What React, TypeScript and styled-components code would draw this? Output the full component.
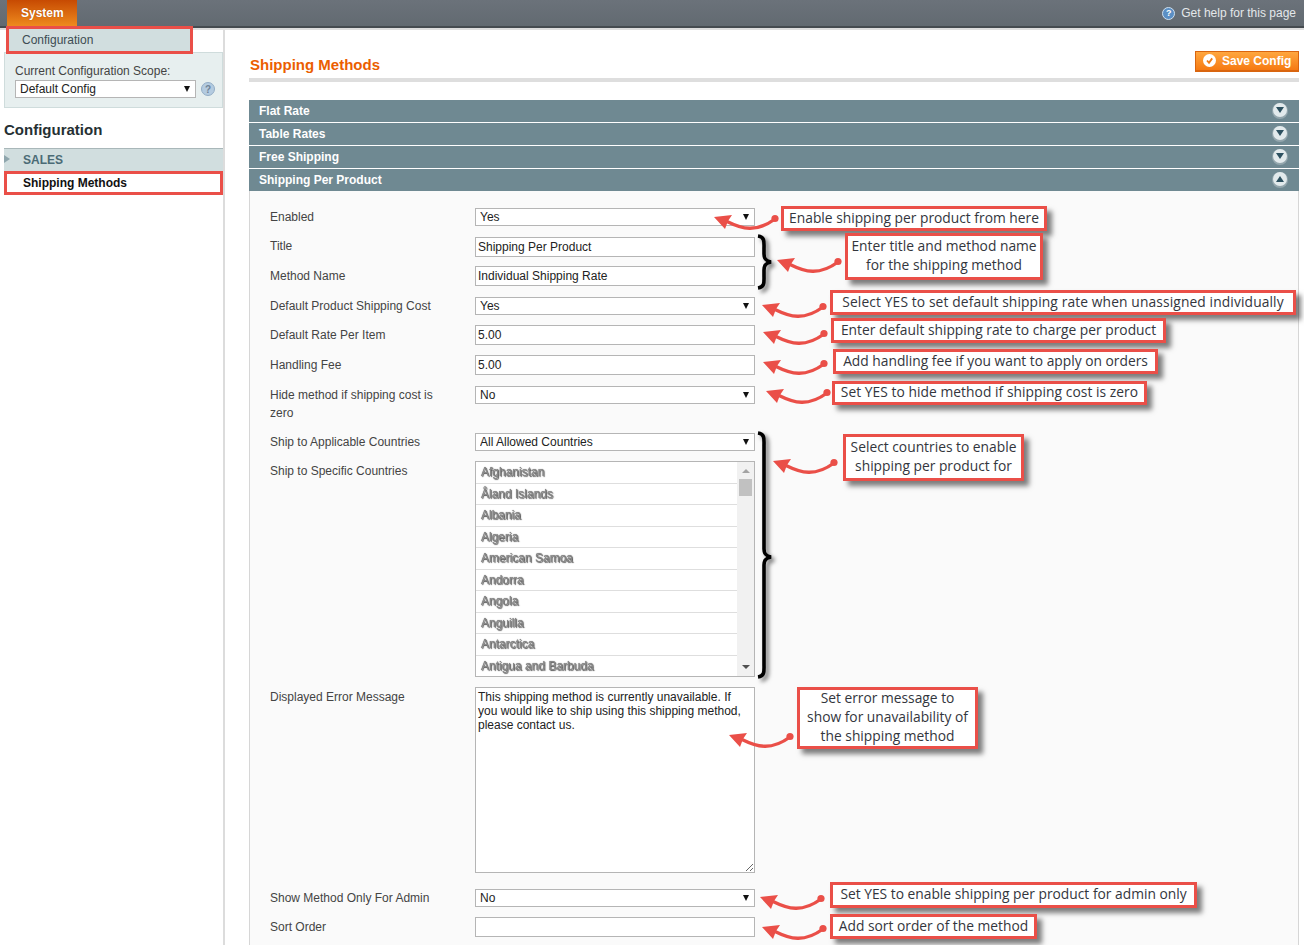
import React from "react";
import styled, { createGlobalStyle } from "styled-components";

const RED = "#ea4f48";

const GlobalStyle = createGlobalStyle`
  html, body {
    margin: 0;
    height: 945px;
    overflow: hidden;
    background: #fff;
    font-family: "Liberation Sans", Arial, sans-serif;
    font-size: 12px;
    color: #444;
  }
`;

const Page = styled.div`
  position: relative;
  width: 1304px;
  height: 945px;
  overflow: hidden;
`;

const Header = styled.header`
  height: 26px;
  display: flex;
  justify-content: space-between;
  padding: 0 8px 0 7px;
  background: linear-gradient(#6b727a, #626a71);
  border-bottom: 2px solid #454b50;
  box-shadow: 0 2px 0 #dedede;
`;

const SystemTab = styled.div`
  position: relative;
  width: 70px;
  height: 26px;
  display: flex;
  align-items: center;
  padding-left: 14px;
  box-sizing: border-box;
  color: #fff;
  font-weight: bold;
  background: linear-gradient(#c74a02, #ee8a1e);
  text-shadow: 0 0 1px #a84500;
`;

const DropMenu = styled.div`
  position: absolute;
  left: -1px;
  top: 26px;
  z-index: 2;
  width: 187px;
  height: 28px;
  box-sizing: border-box;
  padding-left: 13px;
  display: flex;
  align-items: center;
  font-weight: normal;
  color: #3d4c52;
  text-shadow: none;
  background: #d1dedf;
  border: 3px solid ${RED};
`;

const HelpLink = styled.div`
  display: flex;
  align-items: center;
  gap: 6px;
  color: #e4e8ea;
`;

const HelpDot = styled.span<{ $size: number; $pale?: boolean }>`
  width: ${(p) => p.$size}px;
  height: ${(p) => p.$size}px;
  flex: none;
  border-radius: 50%;
  display: flex;
  align-items: center;
  justify-content: center;
  box-sizing: border-box;
  color: ${(p) => (p.$pale ? "#6f8296" : "#fff")};
  font-size: ${(p) => p.$size - 4}px;
  font-weight: bold;
  background: ${(p) => (p.$pale ? "#b4cbe0" : "#5b8fc4")};
  border: 1px solid ${(p) => (p.$pale ? "#93adc6" : "#cfe0ef")};
`;

const Columns = styled.div`
  display: flex;
  padding: 2px 5px 0 4px;
  height: 915px;
`;

const Sidebar = styled.aside`
  width: 219px;
  flex: none;
  padding-top: 22px;
  border-right: 2px solid #dcdcdc;
`;

const ScopeBox = styled.div`
  height: 56px;
  box-sizing: border-box;
  padding: 11px 0 0 10px;
  background: #e7efef;
  border: 1px solid #cfdcdc;
  color: #444;
`;

const ScopeRow = styled.div`
  display: flex;
  align-items: center;
  gap: 5px;
  margin-top: 2px;
`;

const SideTitle = styled.h3`
  margin: 12px 0 8px;
  font-size: 15px;
  line-height: 20px;
  font-weight: bold;
  color: #253033;
`;

const SalesBar = styled.div`
  height: 22px;
  display: flex;
  align-items: center;
  padding-left: 19px;
  position: relative;
  background: #d1dedf;
  border-top: 1px solid #a9b7b9;
  color: #4b6b76;
  font-weight: bold;
  &::before {
    content: "";
    position: absolute;
    left: 0;
    top: 6px;
    border-left: 6px solid #8fa6ad;
    border-top: 4px solid transparent;
    border-bottom: 4px solid transparent;
  }
`;

const ActiveLink = styled.div`
  height: 24px;
  box-sizing: border-box;
  padding-left: 16px;
  display: flex;
  align-items: center;
  border: 3px solid ${RED};
  color: #111;
  font-weight: bold;
`;

const Main = styled.main`
  flex: 1;
  min-width: 0;
  margin-left: 24px;
  padding-top: 21px;
`;

const TitleBar = styled.div`
  height: 27px;
  display: flex;
  justify-content: space-between;
  align-items: flex-start;
  border-bottom: 4px solid #dedede;
  margin-bottom: 18px;
  padding-left: 1px;
`;

const PageTitle = styled.h3`
  margin: 5px 0 0;
  font-size: 15px;
  line-height: 18px;
  font-weight: bold;
  color: #eb5e00;
`;

const SaveButton = styled.button`
  width: 104px;
  height: 21px;
  display: flex;
  align-items: center;
  gap: 6px;
  padding: 0 0 1px 7px;
  box-sizing: border-box;
  font: bold 12px "Liberation Sans", Arial, sans-serif;
  color: #fff;
  background: linear-gradient(#ffa73f, #f67a12);
  border: 1px solid #d9650f;
  border-bottom-width: 2px;
`;

const CheckDot = styled.svg`
  width: 13px;
  height: 13px;
  flex: none;
`;

const SectionHead = styled.div`
  height: 22px;
  margin-bottom: 1px;
  display: flex;
  align-items: center;
  justify-content: space-between;
  padding: 0 12px 0 10px;
  background: #6f8992;
  color: #fff;
  font-weight: bold;
  &:last-of-type {
    margin-bottom: 0;
  }
`;

const Toggle = styled.span<{ $open?: boolean }>`
  width: 14px;
  height: 14px;
  margin-bottom: 2px;
  border-radius: 50%;
  display: flex;
  align-items: center;
  justify-content: center;
  background: #e2eaec;
  box-shadow: 0 1px 0 1px #93a6ad;
  &::after {
    content: "";
    border-left: 4px solid transparent;
    border-right: 4px solid transparent;
    ${(p) =>
      p.$open
        ? "border-bottom: 6px solid #2d5160;"
        : "border-top: 6px solid #2d5160;"}
  }
`;

const Panel = styled.section`
  height: 760px;
  box-sizing: border-box;
  padding: 17px 20px 0;
  background: #fafafa;
  border: 1px solid #d6d6d6;
  border-top: 0;
`;

const Row = styled.div<{ $after: number }>`
  display: flex;
  margin-bottom: ${(p) => p.$after}px;
`;

const Label = styled.label<{ $drop?: boolean }>`
  width: 205px;
  flex: none;
  padding: ${(p) => (p.$drop ? "1px" : "0")} 30px 0 0;
  box-sizing: border-box;
  line-height: 18px;
  color: #444;
`;

const SelectWrap = styled.div<{ $width: number }>`
  position: relative;
  width: ${(p) => p.$width}px;
  height: 18px;
  &::after {
    content: "";
    position: absolute;
    right: 6.5px;
    top: 6px;
    border-left: 3.5px solid transparent;
    border-right: 3.5px solid transparent;
    border-top: 6px solid #111;
    pointer-events: none;
  }
`;

const NativeSelect = styled.select`
  appearance: none;
  display: block;
  width: 100%;
  height: 18px;
  box-sizing: border-box;
  margin: 0;
  padding: 0 0 0 4px;
  background: #fff;
  border: 1px solid #b5b5b5;
  border-radius: 0;
  font: 12px "Liberation Sans", Arial, sans-serif;
  color: #222;
`;

const TextInput = styled.input`
  display: block;
  width: 280px;
  height: 20px;
  box-sizing: border-box;
  margin: 0;
  padding: 0 2px;
  background: #fff;
  border: 1px solid #b5b5b5;
  font: 12px "Liberation Sans", Arial, sans-serif;
  color: #222;
`;

const ListBox = styled.div`
  width: 280px;
  height: 216px;
  box-sizing: border-box;
  display: flex;
  background: #fff;
  border: 1px solid #b5b5b5;
`;

const CountryList = styled.ul`
  flex: 1;
  list-style: none;
  margin: 0;
  padding: 0;
  display: flex;
  flex-direction: column;
`;

const Country = styled.li`
  flex: 1;
  display: flex;
  align-items: center;
  padding-left: 5px;
  border-bottom: 1px solid #dedede;
  color: #888;
  &:last-child {
    border-bottom: 0;
  }
  & > span {
    filter: blur(0.7px);
    text-shadow: 1px 1px 1px #555, 0 0 1px #777;
  }
`;

const Scrollbar = styled.div`
  width: 17px;
  flex: none;
  display: flex;
  flex-direction: column;
  align-items: center;
  box-sizing: border-box;
  padding: 7px 2px 7px;
  background: #f1f1f1;
`;

const ScrollArrow = styled.span<{ $up?: boolean }>`
  border-left: 4px solid transparent;
  border-right: 4px solid transparent;
  ${(p) =>
    p.$up
      ? "border-bottom: 4px solid #a3a3a3;"
      : "border-top: 4px solid #505050; margin-top: auto;"}
`;

const ScrollThumb = styled.span`
  width: 13px;
  height: 17px;
  margin-top: 6px;
  background: #c1c1c1;
`;

const MessageArea = styled.textarea`
  display: block;
  width: 280px;
  height: 186px;
  box-sizing: border-box;
  margin: 0;
  padding: 2px;
  background: #fff;
  border: 1px solid #b5b5b5;
  border-radius: 0;
  font: 12px/14px "Liberation Sans", Arial, sans-serif;
  color: #222;
`;

const Callout = styled.div<{ $x: number; $y: number; $w: number; $h: number; $track?: number }>`
  position: absolute;
  left: ${(p) => p.$x}px;
  top: ${(p) => p.$y}px;
  width: ${(p) => p.$w}px;
  height: ${(p) => p.$h}px;
  box-sizing: border-box;
  padding-bottom: 3px;
  display: flex;
  align-items: center;
  justify-content: center;
  text-align: center;
  white-space: pre-line;
  background: #fff;
  border: 3px solid ${RED};
  box-shadow: 5px 5px 5px rgba(0, 0, 0, 0.5);
  font-family: "Open Sans", "Noto Sans", sans-serif;
  font-size: 13.8px;
  line-height: 19px;
  letter-spacing: ${(p) => p.$track ?? 0}px;
  color: #33363d;
`;

const ArrowSvg = styled.svg<{ $x: number; $y: number }>`
  position: absolute;
  left: ${(p) => p.$x}px;
  top: ${(p) => p.$y - 8}px;
  width: 68px;
  height: 26px;
  overflow: visible;
`;

const BraceSvg = styled.svg<{ $y: number; $h: number }>`
  position: absolute;
  left: 755px;
  top: ${(p) => p.$y}px;
  width: 20px;
  height: ${(p) => p.$h}px;
  overflow: visible;
  filter: drop-shadow(3px 3px 2px rgba(0, 0, 0, 0.55));
`;

const Arrow: React.FC<{ x: number; y: number }> = ({ x, y }) => (
  <ArrowSvg $x={x} $y={y} viewBox="0 -8 68 26">
    <path d="M0 0 L18 -2 L14 4 L11 12 Z" fill={RED} />
    <path
      d="M13 4.5 C28 12 42 16 61 2"
      fill="none"
      stroke={RED}
      strokeWidth="3.4"
      strokeLinecap="round"
    />
    <circle cx="61" cy="1.5" r="3.6" fill={RED} />
  </ArrowSvg>
);

const Brace: React.FC<{ y: number; h: number; tip: number }> = ({ y, h, tip }) => (
  <BraceSvg $y={y} $h={h} viewBox={`0 0 20 ${h}`}>
    <path
      d={`M3 1 C10 2 9 7 9 14 L9 ${tip - 8} C9 ${tip - 3} 11 ${tip - 1} 16 ${tip}
          C11 ${tip + 1} 9 ${tip + 3} 9 ${tip + 8} L9 ${h - 14} C9 ${h - 7} 10 ${h - 2} 3 ${h - 1}`}
      fill="none"
      stroke="#000"
      strokeWidth="3.6"
    />
  </BraceSvg>
);

const Select: React.FC<{ value: string; width?: number }> = ({ value, width = 280 }) => (
  <SelectWrap $width={width}>
    <NativeSelect defaultValue={value}>
      <option>{value}</option>
    </NativeSelect>
  </SelectWrap>
);

const countries = [
  "Afghanistan",
  "Åland Islands",
  "Albania",
  "Algeria",
  "American Samoa",
  "Andorra",
  "Angola",
  "Anguilla",
  "Antarctica",
  "Antigua and Barbuda",
];

const callouts = [
  { x: 781, y: 206, w: 266, h: 25, text: "Enable shipping per product from here" },
  { x: 845, y: 233, w: 198, h: 47, text: "Enter title and method name\nfor the shipping method" },
  { x: 830, y: 290, w: 466, h: 25, track: 0.12, text: "Select YES to set default shipping rate when unassigned individually" },
  { x: 831, y: 318, w: 335, h: 25, text: "Enter default shipping rate to charge per product" },
  { x: 833, y: 349, w: 325, h: 25, text: "Add handling fee if you want to apply on orders" },
  { x: 832, y: 381, w: 315, h: 24, track: 0.05, text: "Set YES to hide method if shipping cost is zero" },
  { x: 843, y: 434, w: 181, h: 47, text: "Select countries to enable\nshipping per product for" },
  { x: 797, y: 687, w: 181, h: 62, text: "Set error message to\nshow for unavailability of\nthe shipping method" },
  { x: 830, y: 882, w: 367, h: 26, text: "Set YES to enable shipping per product for admin only" },
  { x: 830, y: 914, w: 207, h: 25, text: "Add sort order of the method" },
];

const arrows = [
  [714, 217],
  [777, 260],
  [762, 305],
  [763, 332],
  [763, 362],
  [766, 391],
  [773, 461],
  [729, 735],
  [760, 897],
  [762, 927],
];

const App: React.FC = () => {
  return (
    <Page>
      <GlobalStyle />
      <Header>
        <SystemTab>
          System
          <DropMenu>Configuration</DropMenu>
        </SystemTab>
        <HelpLink>
          <HelpDot $size={13}>?</HelpDot>
          Get help for this page
        </HelpLink>
      </Header>
      <Columns>
        <Sidebar>
          <ScopeBox>
            Current Configuration Scope:
            <ScopeRow>
              <Select value="Default Config" width={181} />
              <HelpDot $size={14} $pale>
                ?
              </HelpDot>
            </ScopeRow>
          </ScopeBox>
          <SideTitle>Configuration</SideTitle>
          <SalesBar>SALES</SalesBar>
          <ActiveLink>Shipping Methods</ActiveLink>
        </Sidebar>
        <Main>
          <TitleBar>
            <PageTitle>Shipping Methods</PageTitle>
            <SaveButton>
              <CheckDot viewBox="0 0 13 13">
                <circle cx="6.5" cy="6.5" r="6.5" fill="#fff" />
                <path d="M4 6.5 L6 8.8 L9.2 4.4" fill="none" stroke="#ee7a16" strokeWidth="1.8" />
              </CheckDot>
              Save Config
            </SaveButton>
          </TitleBar>
          <SectionHead>
            Flat Rate
            <Toggle />
          </SectionHead>
          <SectionHead>
            Table Rates
            <Toggle />
          </SectionHead>
          <SectionHead>
            Free Shipping
            <Toggle />
          </SectionHead>
          <SectionHead>
            Shipping Per Product
            <Toggle $open />
          </SectionHead>
          <Panel>
            <Row $after={11}>
              <Label>Enabled</Label>
              <Select value="Yes" />
            </Row>
            <Row $after={9}>
              <Label>Title</Label>
              <TextInput defaultValue="Shipping Per Product" />
            </Row>
            <Row $after={11}>
              <Label $drop>Method Name</Label>
              <TextInput defaultValue="Individual Shipping Rate" />
            </Row>
            <Row $after={10}>
              <Label>Default Product Shipping Cost</Label>
              <Select value="Yes" />
            </Row>
            <Row $after={10}>
              <Label $drop>Default Rate Per Item</Label>
              <TextInput defaultValue="5.00" />
            </Row>
            <Row $after={11}>
              <Label $drop>Handling Fee</Label>
              <TextInput defaultValue="5.00" />
            </Row>
            <Row $after={11}>
              <Label>Hide method if shipping cost is zero</Label>
              <Select value="No" />
            </Row>
            <Row $after={10}>
              <Label>Ship to Applicable Countries</Label>
              <Select value="All Allowed Countries" />
            </Row>
            <Row $after={10}>
              <Label $drop>Ship to Specific Countries</Label>
              <ListBox>
                <CountryList>
                  {countries.map((name) => (
                    <Country key={name}>
                      <span>{name}</span>
                    </Country>
                  ))}
                </CountryList>
                <Scrollbar>
                  <ScrollArrow $up />
                  <ScrollThumb />
                  <ScrollArrow />
                </Scrollbar>
              </ListBox>
            </Row>
            <Row $after={16}>
              <Label $drop>Displayed Error Message</Label>
              <MessageArea defaultValue="This shipping method is currently unavailable. If you would like to ship using this shipping method, please contact us." />
            </Row>
            <Row $after={10}>
              <Label>Show Method Only For Admin</Label>
              <Select value="No" />
            </Row>
            <Row $after={0}>
              <Label $drop>Sort Order</Label>
              <TextInput />
            </Row>
          </Panel>
        </Main>
      </Columns>
      <Brace y={235} h={54} tip={27} />
      <Brace y={432} h={246} tip={125} />
      {arrows.map(([x, y]) => (
        <Arrow key={`${x}-${y}`} x={x} y={y} />
      ))}
      {callouts.map((c) => (
        <Callout key={c.text} $x={c.x} $y={c.y} $w={c.w} $h={c.h} $track={c.track}>
          {c.text}
        </Callout>
      ))}
    </Page>
  );
};

export default App;
